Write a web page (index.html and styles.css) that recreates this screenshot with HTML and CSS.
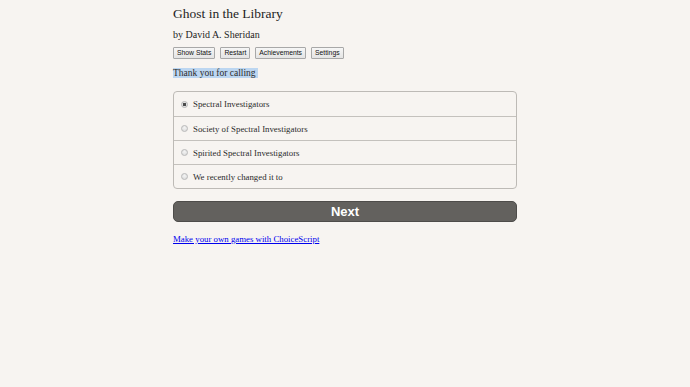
FILE: index.html
```html
<!DOCTYPE html>
<html>
<head>
<meta charset="utf-8">
<link rel="stylesheet" href="styles.css">
</head>
<body>
<div class="container">
  <h1 class="title">Ghost in the Library</h1>
  <h2 class="author">by David A. Sheridan</h2>
  <div class="buttons">
    <button class="tb">Show Stats</button>
    <button class="tb">Restart</button>
    <button class="tb">Achievements</button>
    <button class="tb">Settings</button>
  </div>
  <p class="text"><span class="sel">Thank you for calling</span></p>
  <form class="choices">
    <label class="row"><input type="radio" name="c" checked> Spectral Investigators</label>
    <label class="row"><input type="radio" name="c"> Society of Spectral Investigators</label>
    <label class="row"><input type="radio" name="c"> Spirited Spectral Investigators</label>
    <label class="row"><input type="radio" name="c"> We recently changed it to</label>
  </form>
  <button class="next">Next</button>
  <p class="footer"><a href="#">Make your own games with ChoiceScript</a></p>
</div>
</body>
</html>
```
FILE: styles.css
```css
html, body { margin: 0; padding: 0; background: #f7f4f1; }
body { font-family: "Liberation Serif", "Times New Roman", serif; color: #2b2b2b; }
.container { width: 344px; margin: 0 auto; padding-top: 4px; }
.title { font-size: 13.5px; font-weight: normal; margin: 0; line-height: 19px; color: #1e1e1e; }
.author { font-size: 10px; font-weight: normal; margin: 5px 0 0; line-height: 14px; color: #1e1e1e; }
.buttons { display: flex; gap: 5px; margin-top: 5px; }
.tb { font-family: "Liberation Sans", Arial, sans-serif; font-size: 6.8px; padding: 0 3px; height: 12px; line-height: 10px; background: linear-gradient(#f6f6f6, #e4e4e4); border: 1px solid #a8a8a8; border-radius: 1px; color: #111; }
.text { margin: 8px 0 0; font-size: 9.5px; line-height: 12px; }
.sel { background: #bcd6f1; padding-right: 2px; }
.choices { margin-top: 12px; border: 1px solid #bdbab6; border-radius: 4px; }
.row { display: flex; align-items: center; height: 23px; font-size: 8.8px; padding-left: 7px; border-top: 1px solid #c4c1bd; color: #2b2b2b; }
.row:first-child { border-top: none; height: 24px; }
.row input { appearance: none; -webkit-appearance: none; margin: 0 5px 0 0; width: 7px; height: 7px; border-radius: 50%; border: 1px solid #b9b9b9; background: radial-gradient(circle at 50% 35%, #f4f4f4, #d8d8d8); box-sizing: border-box; }
.row input:checked { background: radial-gradient(circle, #4a4a4a 0 1.4px, #e2e2e2 1.9px); border-color: #b5b5b5; }
.next { display: block; width: 100%; margin-top: 12px; height: 21px; background: #63615e; color: #fff; border: 1px solid #4e4c4a; border-radius: 5px; font-family: "Liberation Sans", Arial, sans-serif; font-weight: bold; font-size: 13px; padding: 0; }
.footer { margin: 11px 0 0; font-size: 8.8px; line-height: 12px; }
.footer a { color: #0000ee; }
```
